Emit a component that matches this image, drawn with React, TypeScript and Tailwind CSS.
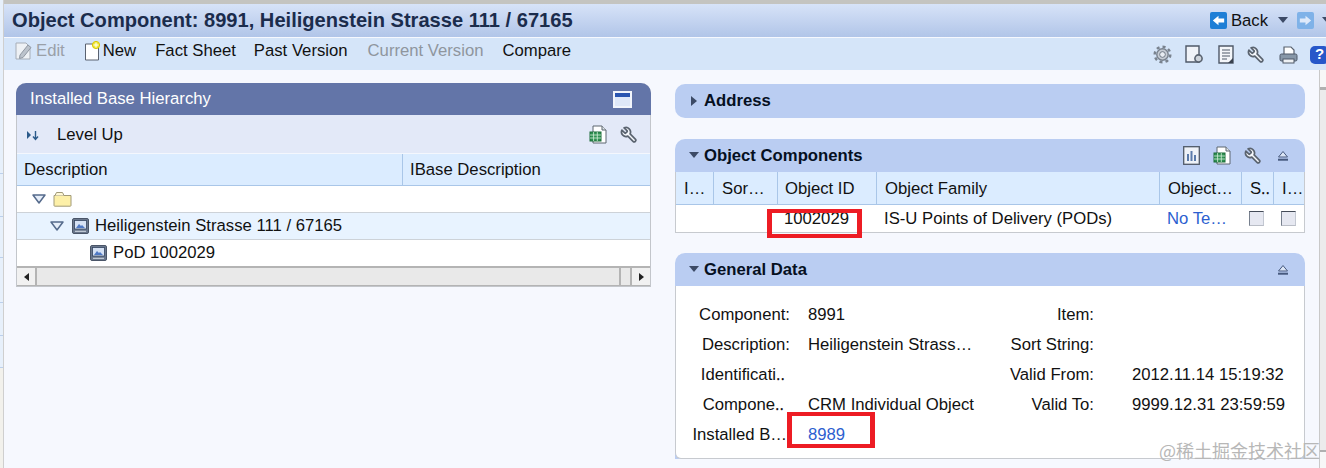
import React from "react";

const font = "font-['Liberation_Sans',Arial,sans-serif]";

function Wrench({ className = "" }: { className?: string }) {
  return (
    <svg viewBox="0 0 24 24" className={`h-[18px] w-[18px] -scale-x-100 ${className}`} fill="#f6f8fc" stroke="#5b6470" strokeWidth="2.3" strokeLinejoin="round" strokeLinecap="round">
      <path d="M14.7 6.3a1 1 0 0 0 0 1.4l1.6 1.6a1 1 0 0 0 1.4 0l3.77-3.77a6 6 0 0 1-7.94 7.94l-6.91 6.91a2.12 2.12 0 0 1-3-3l6.91-6.91a6 6 0 0 1 7.94-7.94l-3.76 3.76z" />
    </svg>
  );
}

function Sheet() {
  return (
    <svg viewBox="0 0 18 20" className="h-5 w-[18px]">
      <path d="M4 1h9l4 4v13H4z" fill="#fff" stroke="#5c6670" />
      <path d="M13 1v4h4" fill="#dfe5ea" stroke="#5c6670" />
      <rect x="1" y="7" width="11" height="9" fill="#2f9152" stroke="#1d6d38" />
      <path d="M1 10h11M1 13h11M4.6 7v9M8.3 7v9" stroke="#d4efd9" strokeWidth=".8" />
    </svg>
  );
}

function Collapse() {
  return (
    <svg viewBox="0 0 12 12" className="h-3 w-3">
      <path d="M6 1.5 10.5 7h-9z" fill="#dbe5f5" stroke="#46597e" />
      <rect x="1" y="8.7" width="10" height="2" fill="#46597e" />
    </svg>
  );
}

function Caret() {
  return (
    <svg viewBox="0 0 10 6" className="h-[6px] w-[10px]">
      <path d="M0 0h10L5 6z" fill="#3c4a66" />
    </svg>
  );
}

function TreeToggle() {
  return (
    <svg viewBox="0 0 14 10" className="h-[10px] w-[14px]">
      <path d="M1 1h12L7 9z" fill="#e6eef9" stroke="#566b8c" strokeWidth="1.5" strokeLinejoin="round" />
    </svg>
  );
}

function ObjectIcon() {
  return (
    <svg viewBox="0 0 17 16" className="h-4 w-[17px]">
      <rect x=".5" y=".5" width="16" height="15" rx="1.5" fill="#6a778c" stroke="#4a5568" />
      <rect x="2.5" y="2.5" width="12" height="8.5" fill="#d5e1f4" stroke="#34445f" strokeWidth=".8" />
      <path d="M4 10l3-4 2 2 1-1 3 3z" fill="#4f79c5" />
      <path d="M3 13.3h11" stroke="#d5dce6" />
    </svg>
  );
}

function Folder() {
  return (
    <svg viewBox="0 0 19 16" className="h-4 w-[19px]">
      <path d="M1 4.5V14.5c0 .4.3.7.7.7h15.6c.4 0 .7-.3.7-.7V4.5z" fill="#fdf0a8" stroke="#a19a78" />
      <path d="M2 4.5 3.5 1.5h6L11 4.5" fill="#fff8d6" stroke="#a19a78" />
    </svg>
  );
}

function Check() {
  return <span className="h-[15px] w-[15px] border border-b-[#b9bdc6] border-l-[#77808e] border-r-[#c3c8d2] border-t-[#444b57] bg-[#e6e8f1]" />;
}

function Panel({ title, tall, tools, children }: { title: string; tall?: boolean; tools?: React.ReactNode; children?: React.ReactNode }) {
  return (
    <section className={`bg-[#bacdf2] ${children ? "rounded-t-[10px]" : "rounded-[10px]"}`}>
      <header className={`flex items-center justify-between pl-[14px] pr-[16px] ${tall ? "h-[34px]" : "h-[33px]"}`}>
        <div className="flex items-center gap-[5px]">
          {title === "Address" ? (
            <svg viewBox="0 0 6 10" className="ml-[2px] mr-[2px] h-[10px] w-[6px]"><path d="M0 0v10l6-5z" fill="#3c4a66" /></svg>
          ) : (
            <Caret />
          )}
          <h2 className="text-[16.7px] font-bold text-[#06101f]">{title}</h2>
        </div>
        {tools}
      </header>
      {children}
    </section>
  );
}

const formRows = [
  { l1: "Component:", v1: "8991", l2: "Item:", v2: "", pad: "" },
  { l1: "Description:", v1: "Heiligenstein Strass…", l2: "Sort String:", v2: "", pad: "" },
  { l1: "Identificati‥", v1: "", l2: "Valid From:", v2: "2012.11.14 15:19:32", pad: "pr-[5px]" },
  { l1: "Compone‥", v1: "CRM Individual Object", l2: "Valid To:", v2: "9999.12.31 23:59:59", pad: "pr-[6px]" },
  { l1: "Installed B…", v1: "8989", l2: "", v2: "", pad: "pr-[3px]" },
];

const compCols = ["I…", "Sor…", "Object ID", "Object Family", "Object…", "S‥", "I…"];
const compTemplate = "grid-cols-[38px_64px_99px_283px_82px_32px_30px]";
const sliverRows = ["h-[174px]", "h-[43px]", "h-[41px]", "h-[45px]", "h-[33px]", "h-[32px]"];

export default function App() {
  return (
    <div className={`${font} relative flex h-[468px] w-[1326px] overflow-hidden bg-[#f6f8fe] text-[16.7px] text-[#111]`}>
      {/* page sliver behind the window */}
      <div className="flex w-1 shrink-0 flex-col border-r border-[#cfcfcf]">
        {sliverRows.map((h, i) => (
          <div key={i} className={`${h} border-b border-[#bcd0ec] bg-[#e7f0fb]`} />
        ))}
        <div className="flex-1 bg-[#f2f1ec]" />
      </div>

      <div className="flex min-w-0 flex-1 flex-col">
        <div className="h-1 shrink-0 bg-[#c4c4c0]" />
        {/* Title */}
        <div className="flex h-[33px] shrink-0 items-center justify-between bg-gradient-to-b from-[#d7e3f8] to-[#b1c5e8] pl-2">
          <h1 className="text-[20.1px] font-bold text-[#1b2c4c]">Object Component: 8991, Heiligenstein Strasse 111 / 67165</h1>
          <div className="flex items-center">
            <svg viewBox="0 0 18 18" className="h-[17px] w-[17px]">
              <rect width="18" height="18" rx="2" fill="#1f7fd6" />
              <path d="M3 9l6-5v3h6v4H9v3z" fill="#fff" />
            </svg>
            <span className="ml-[4px] text-[#111]">Back</span>
            <span className="ml-[10px] flex"><Caret /></span>
            <svg viewBox="0 0 18 18" className="ml-[9px] h-[17px] w-[17px]">
              <rect width="18" height="18" rx="2" fill="#7fb2e8" />
              <path d="M15 9l-6-5v3H3v4h6v3z" fill="#dfeafa" />
            </svg>
            <span className="ml-2 -mr-[6px] flex"><Caret /></span>
          </div>
        </div>
        {/* Toolbar */}
        <div className="mt-px flex h-[32px] shrink-0 items-center justify-between bg-[#d5e5f9] pl-[11px]">
          <div className="flex items-center pb-[6px]">
            <svg viewBox="0 0 17 18" className="h-[18px] w-[17px]">
              <path d="M1 1h10l4 4v12H1z" fill="#eef1f5" stroke="#a6adb7" />
              <path d="M5 13 13 3l3 2.5-8 10-3.5 1z" fill="#bcc3cc" stroke="#9098a2" />
            </svg>
            <span className="ml-1 text-[#9aa0a8]">Edit</span>
            <svg viewBox="0 0 17 20" className="ml-[19px] h-[20px] w-[17px]">
              <path d="M1.5 3h10l3 3v13h-13z" fill="#fff" stroke="#5a6270" />
              <circle cx="12" cy="4" r="3.6" fill="#f3e93d" stroke="#d8c700" />
              <path d="M12 1.6v4.8M9.6 4h4.8" stroke="#fff" />
            </svg>
            <span className="ml-[2px]">New</span>
            <span className="ml-[19px]">Fact Sheet</span>
            <span className="ml-[18px]">Past Version</span>
            <span className="ml-[20px] text-[#8f969e]">Current Version</span>
            <span className="ml-[19px]">Compare</span>
          </div>
          <div className="flex items-center pt-px">
            <svg viewBox="0 0 20 20" className="h-[19px] w-[19px]">
              <circle cx="10" cy="10" r="8.2" fill="none" stroke="#79828e" strokeWidth="2.6" strokeDasharray="3.2 3.2" />
              <circle cx="10" cy="10" r="6" fill="#c6ccd5" stroke="#79828e" strokeWidth="1.5" />
              <circle cx="10" cy="10" r="3" fill="#e8ecf2" stroke="#6c7582" />
            </svg>
            <svg viewBox="0 0 19 19" className="ml-[13px] h-[19px] w-[19px]">
              <path d="M1 1h13v16H1z" fill="#f0f3f8" stroke="#4f5968" strokeWidth="1.4" />
              <circle cx="13.5" cy="13.5" r="3.6" fill="#cdd3da" stroke="#59626f" strokeWidth="1.6" />
            </svg>
            <svg viewBox="0 0 16 19" className="ml-[14px] h-[19px] w-[16px]">
              <path d="M1 1h14v17H1z" fill="#f4f6f9" stroke="#4f5968" strokeWidth="1.4" />
              <path d="M4 5h8M4 8h8M4 11h8M4 14h5" stroke="#4f5968" strokeWidth="1.2" />
              <path d="M15 13v5h-5z" fill="#39414e" />
            </svg>
            <Wrench className="ml-[13px]" />
            <svg viewBox="0 0 19 18" className="ml-[14px] h-[18px] w-[19px]">
              <path d="M5 8V1h7l3 3v4" fill="#fff" stroke="#59626f" strokeWidth="1.2" />
              <rect x="1" y="8" width="17" height="7" rx="1.5" fill="#8797a8" stroke="#4f5968" />
              <rect x="4" y="13" width="11" height="4" fill="#eef1f4" stroke="#4f5968" />
            </svg>
            <span className="-mr-[3px] ml-[12px] flex h-[18px] w-[19px] items-center justify-center rounded-[5px] bg-[#2757c9] text-[15px] font-bold text-white">?</span>
          </div>
        </div>

        {/* Content */}
        <div className="flex min-h-0 flex-1 items-start">
          <div className="mt-[13px] ml-3 w-[635px] shrink-0 rounded-t-[10px] border border-t-0 border-[#c3c6cb] bg-white">
            <div className="-mx-px flex h-[32px] items-center justify-between rounded-t-[10px] bg-[#6375a8] pl-[14px] pr-[19px]">
              <h2 className="text-white">Installed Base Hierarchy</h2>
              <span className="flex h-[17px] w-[19px] flex-col border-2 border-[#f2f5fb] bg-[#dfe8f8]">
                <span className="h-[4px] bg-[#2a55b0]" />
              </span>
            </div>
            <div className="flex h-[39px] items-center justify-between border-b border-[#f4f7fd] bg-[#e3e9f8] pl-[9px] pr-[12px] pt-[2px]">
              <div className="flex items-center gap-[17px]">
                <svg viewBox="0 0 14 12" className="h-3 w-[14px]">
                  <path d="M1 2v8l4-4z" fill="#2b5a8a" />
                  <path d="M9.5 2v8M7 7.5l2.5 3 2.5-3" stroke="#2b5a8a" strokeWidth="1.4" fill="none" />
                </svg>
                <span>Level Up</span>
              </div>
              <div className="flex items-center gap-[13px]">
                <Sheet />
                <Wrench />
              </div>
            </div>
            <div className="grid h-[32px] grid-cols-[386px_1fr] border-b border-[#a9c6e8] bg-[#dbecff]">
              <div className="flex items-center border-r border-[#a9c6e8] pl-[7px]">Description</div>
              <div className="flex items-center pl-[7px]">IBase Description</div>
            </div>
            <div className="flex h-[27px] items-center gap-[7px] border-b border-[#cdd2d8] pl-[15px]">
              <TreeToggle />
              <Folder />
            </div>
            <div className="flex h-[27px] items-center gap-[8px] border-b border-[#cdd2d8] bg-[#e8f3ff] pl-[33px]">
              <TreeToggle />
              <ObjectIcon />
              <span className="-ml-[2px]">Heiligenstein Strasse 111 / 67165</span>
            </div>
            <div className="flex h-[26px] items-center gap-[6px] pl-[73px]">
              <ObjectIcon />
              <span>PoD 1002029</span>
            </div>
            {/* Scrollbar */}
            <div className="flex h-[20px] items-stretch border-t-2 border-b border-[#b4b4b4] bg-[#e9e9e9]">
              <span className="flex w-[20px] items-center justify-center border-r-2 border-[#b4b4b4] bg-[#f1f1f1]">
                <svg viewBox="0 0 5 8" className="h-2 w-[5px]"><path d="M5 0v8L0 4z" fill="#222" /></svg>
              </span>
              <span className="flex-1 border-r-2 border-[#b4b4b4]" />
              <span className="ml-[9px] flex w-[20px] items-center justify-center border-l-2 border-[#b4b4b4] bg-[#f1f1f1]">
                <svg viewBox="0 0 5 8" className="h-2 w-[5px]"><path d="M0 0v8l5-4z" fill="#222" /></svg>
              </span>
            </div>
          </div>

          <div className="ml-[24px] mt-[14px] flex w-[630px] shrink-0 flex-col">
            <div className="mb-[21px]">
              <Panel title="Address" tall />
            </div>
            <div className="mb-5">
              <Panel
                title="Object Components"
                tools={
                  <div className="flex items-center gap-[13px]">
                    <svg viewBox="0 0 17 19" className="h-[19px] w-[17px]">
                      <rect x=".7" y=".7" width="15.6" height="17.6" fill="#eef2f8" stroke="#4f5968" strokeWidth="1.3" />
                      <path d="M5 15V8M8.5 15V5M12 15V9" stroke="#5b7bab" strokeWidth="2" />
                    </svg>
                    <Sheet />
                    <Wrench />
                    <span className="ml-[2px]"><Collapse /></span>
                  </div>
                }
              >
                <div className="border-x border-b border-[#c7cacf] bg-white">
                  <div className={`grid h-[33px] ${compTemplate} border-b border-[#a9c6e8] bg-[#dbecff]`}>
                    {compCols.map((c, i) => (
                      <div key={c + i} className={`flex items-center overflow-hidden whitespace-nowrap pt-px ${i === 2 ? "pl-[7px]" : "pl-2"} ${i < 6 ? "border-r border-[#a9c6e8]" : ""}`}>
                        {c}
                      </div>
                    ))}
                  </div>
                  <div className={`grid h-[27px] ${compTemplate} items-center`}>
                    <span />
                    <span />
                    <span className="pl-[6px]">1002029</span>
                    <span className="pl-[7px] whitespace-nowrap">IS-U Points of Delivery (PODs)</span>
                    <span className="pl-[7px] text-[#2d5fd0]">No Te…</span>
                    <span className="flex pl-[7px]"><Check /></span>
                    <span className="flex pl-[7px]"><Check /></span>
                  </div>
                </div>
              </Panel>
            </div>
            <Panel title="General Data" tools={<Collapse />}>
              <div className="h-[173px] rounded-b-[6px] border-x border-b border-[#c7cacf] bg-white pt-[14px]">
                {formRows.map(({ l1, v1, l2, v2, pad }) => (
                  <div key={l1} className="grid h-[30px] grid-cols-[114px_172px_132px_1fr] items-center">
                    <span className={`whitespace-nowrap text-right ${pad}`}>{l1}</span>
                    <span className={`pl-[18px] whitespace-nowrap ${v1 === "8989" ? "text-[#2d5fd0]" : ""}`}>{v1}</span>
                    <span className="whitespace-nowrap text-right">{l2}</span>
                    <span className="whitespace-nowrap pl-[38px]">{v2}</span>
                  </div>
                ))}
              </div>
            </Panel>
          </div>

          {/* Page scrollbar */}
          <div className="ml-auto flex h-full w-[7px] flex-col border-l border-[#c9c9c9] bg-[#ececec]">
            <div className="h-[20px] border-b-[3px] border-[#b0b0b0] bg-[#f7f7f7]" />
            <div className="flex-1 border-b-2 border-[#b0b0b0]" />
            <div className="h-[16px] bg-[#f7f7f7]" />
          </div>
        </div>
      </div>

      {/* Annotations over the shot */}
      <div className="absolute left-[767px] top-[209px] h-[29px] w-[95px] border-x-[5px] border-y-[4px] border-[#ed1c24]" />
      <div className="absolute left-[787px] top-[412px] h-[36px] w-[88px] border-x-[5px] border-y-[4px] border-[#ed1c24]" />
      <div className="absolute right-[6px] top-[437px] whitespace-nowrap font-['Noto_Sans_CJK_SC',sans-serif] text-[18px] text-[#b7b7b7]">@稀土掘金技术社区</div>
    </div>
  );
}
